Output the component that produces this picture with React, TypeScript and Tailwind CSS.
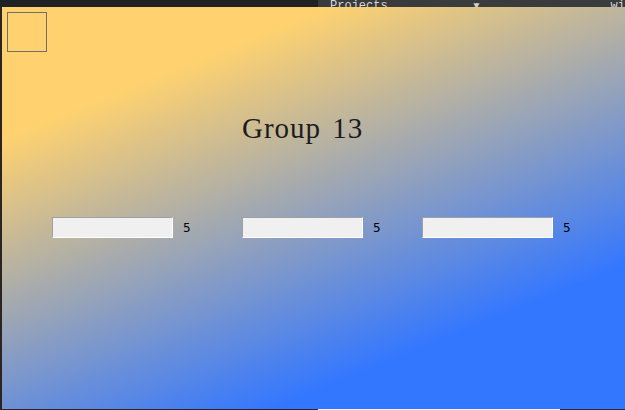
const fields = [
  { box: 'w-[121px]', group: 'w-[190px]' },
  { box: 'w-[121px]', group: 'w-[180px]' },
  { box: 'w-[131px]', group: 'w-[180px]' },
]

export default function App() {
  return (
    <div className="w-[625px] h-[410px] overflow-hidden bg-[#25272b] flex flex-col">
      {/* desktop behind the window */}
      <div className="h-[7px] flex">
        <div className="w-[318px] bg-[#1f2124]" />
        <div className="flex-1 bg-[#3a3b3d] flex items-end overflow-hidden">
          <span className="ml-[12px] -mb-[6px] text-[12px] leading-[14px] text-[#d8d8d8] [font-family:'Liberation_Mono',monospace]">Projects</span>
          <span className="ml-[84px] -mb-[4px] text-[10px] leading-[12px] text-[#cfcfcf]">▼</span>
          <span className="ml-[100px] w-[8px] h-[4px] bg-[#f2a81d]" />
          <span className="ml-[15px] w-[8px] h-[4px] bg-[#bdbdbd]" />
          <span className="ml-[14px] -mb-[6px] text-[12px] leading-[14px] text-[#d8d8d8] [font-family:'Liberation_Mono',monospace]">wid</span>
        </div>
      </div>
      <div className="flex h-[402px]">
        <div className="w-[2px] bg-[#2b2420]" />
        <div className="flex-1 flex flex-col bg-[linear-gradient(158deg,#ffd26f_20%,#3477ff_78%)]">
          <div className="ml-[5px] mt-[5px] w-[40px] h-[40px] border border-[#6e6e6e]" />
          <h1 className="ml-[240px] mt-[56px] h-[40px] text-[29px] leading-[40px] tracking-[1px] [word-spacing:3px] text-[#1c1c1c] [font-family:'Liberation_Serif',serif]">
            Group 13
          </h1>
          <div className="mt-[69px] ml-[50px] flex items-center">
            {fields.map((f, i) => (
              <div key={i} className={`${f.group} flex items-center`}>
                <div className={`${f.box} h-[21px] bg-[#f0f0f0] border-t border-l border-t-[#a0a0a0] border-l-[#a0a0a0] border-b border-r border-b-white border-r-white`} />
                <span className="ml-[10px] text-[12px] text-black [font-family:'DejaVu_Sans',sans-serif]">5</span>
              </div>
            ))}
          </div>
        </div>
      </div>
      <div className="h-[1px] flex">
        <div className="w-[318px] bg-[#2b2420]" />
        <div className="w-[242px] bg-[#f2f2f2]" />
        <div className="flex-1 bg-[#2b2b2b]" />
      </div>
    </div>
  )
}
